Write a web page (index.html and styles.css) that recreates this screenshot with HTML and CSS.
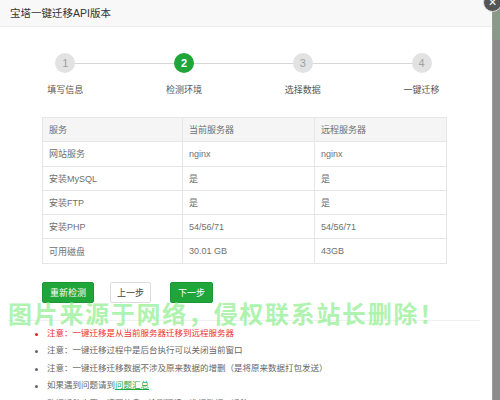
FILE: index.html
```html
<!DOCTYPE html>
<html lang="zh-CN">
<head>
    <meta charset="UTF-8">
    <title>宝塔一键迁移API版本</title>
    <link rel="stylesheet" href="styles.css">
</head>
<body>

<div class="page">
    <!-- 弹窗 -->
    <div class="dialog">
        <div class="dialog-title">宝塔一键迁移API版本</div>

        <!-- 步骤条 -->
        <div class="steps">
            <div class="step">
                <span class="step-num">1</span>
                <span class="step-name">填写信息</span>
            </div>
            <div class="step active">
                <span class="step-num">2</span>
                <span class="step-name">检测环境</span>
            </div>
            <div class="step">
                <span class="step-num">3</span>
                <span class="step-name">选择数据</span>
            </div>
            <div class="step">
                <span class="step-num">4</span>
                <span class="step-name">一键迁移</span>
            </div>
        </div>

        <!-- 环境检测结果 -->
        <table class="env-table">
            <thead>
                <tr><th class="col-name">服务</th><th class="col-cur">当前服务器</th><th>远程服务器</th></tr>
            </thead>
            <tbody>
                <tr><td>网站服务</td><td>nginx</td><td>nginx</td></tr>
                <tr><td>安装MySQL</td><td>是</td><td>是</td></tr>
                <tr><td>安装FTP</td><td>是</td><td>是</td></tr>
                <tr><td>安装PHP</td><td>54/56/71</td><td>54/56/71</td></tr>
                <tr><td>可用磁盘</td><td>30.01 GB</td><td>43GB</td></tr>
            </tbody>
        </table>

        <div class="actions">
            <button class="btn btn-green">重新检测</button>
            <button class="btn btn-plain">上一步</button>
            <button class="btn btn-green">下一步</button>
        </div>

        <div class="divider"></div>

        <ul class="tips">
            <li class="tip-red">注意：一键迁移是从当前服务器迁移到远程服务器</li>
            <li>注意：一键迁移过程中是后台执行可以关闭当前窗口</li>
            <li>注意：一键迁移迁移数据不涉及原来数据的增删（是将原来数据打包发送）</li>
            <li>如果遇到问题请到<a href="#">问题汇总</a></li>
            <li class="no-dot">数据迁移步骤：填写信息 - 检测环境 - 选择数据 - 迁移</li>
        </ul>

        <!-- 水印 -->
        <div class="watermark">图片来源于网络，侵权联系站长删除！</div>
    </div>

    <!-- 遮罩背景 -->
    <div class="backdrop"></div>

    <span class="close-btn">×</span>
</div>

</body>
</html>
```

FILE: styles.css
```css
* {
    margin: 0;
    padding: 0;
    box-sizing: border-box;
}
html, body {
    width: 500px;
    height: 400px;
    overflow: hidden;
}
body {
    font-family: 'Liberation Sans', 'Noto Sans CJK SC', sans-serif;
    color: #666;
    background-color: #fff;
}
.page {
    display: flex;
    height: 400px;
    position: relative;
}
.dialog {
    width: 492px;
    height: 400px;
    background-color: #fff;
    position: relative;
    overflow: hidden;
}
.backdrop {
    flex: 1;
    background: linear-gradient(to bottom, #8a9a88 0, #8a9a88 40px, #8c8c8c 40px, #8c8c8c 100%);
    border-left: 1px solid #9a9a9a;
}
.close-btn {
    position: absolute;
    top: -7px;
    left: 483px;
    width: 19px;
    height: 19px;
    border-radius: 50%;
    background-color: #555;
    border: 1px solid #ddd;
    color: #fff;
    font-size: 14px;
    line-height: 17px;
    text-align: center;
}
.dialog-title {
    height: 27px;
    line-height: 26px;
    padding-left: 10px;
    background-color: #f8f8f8;
    border-bottom: 1px solid #eee;
    color: #333;
    font-size: 10.5px;
}
/* 步骤条 */
.steps {
    display: flex;
    padding: 26px 11px 0 6px;
    position: relative;
}
.steps::before {
    content: "";
    position: absolute;
    top: 36px;
    left: 65px;
    right: 71px;
    height: 1px;
    background-color: #d6d6d6;
}
.step {
    flex: 1;
    display: flex;
    flex-direction: column;
    align-items: center;
    position: relative;
}
.step-num {
    width: 20px;
    height: 20px;
    border-radius: 50%;
    background-color: #e2e2e2;
    color: #a0a0a0;
    font-size: 11px;
    line-height: 20px;
    text-align: center;
}
.step.active .step-num {
    background-color: #20a53a;
    color: #fff;
    font-weight: bold;
}
.step-name {
    margin-top: 11px;
    font-size: 9px;
    line-height: 12px;
    color: #555;
}
/* 表格 */
.env-table {
    margin: 21px 0 0 42px;
    width: 405px;
    border-collapse: collapse;
    border: 1px solid #e2e2e2;
    font-size: 9px;
    table-layout: fixed;
}
.env-table th, .env-table td {
    height: 24.3px;
    padding: 0 6px;
    text-align: left;
    font-weight: normal;
    border: 1px solid #e6e6e6;
    color: #707070;
}
.env-table th {
    background-color: #f5f5f5;
}
.col-name {
    width: 140px;
}
.col-cur {
    width: 132px;
}
/* 按钮 */
.actions {
    display: flex;
    padding: 18px 0 0 42px;
}
.btn {
    height: 21px;
    font-size: 9px;
    border-radius: 2px;
    font-family: 'Liberation Sans', 'Noto Sans CJK SC', sans-serif;
    cursor: pointer;
}
.btn-green {
    background-color: #20a53a;
    border: 1px solid #1c9634;
    color: #fff;
    padding: 0 7px;
}
.btn-plain {
    background-color: #fff;
    border: 1px solid #ddd;
    color: #444;
    padding: 0 6px;
    margin: 0 19px 0 16px;
}
.divider {
    margin: 17px 12px 0 8px;
    height: 1px;
    background-color: #f0f0f0;
}
/* 提示 */
.tips {
    list-style: none;
    padding: 4px 0 0 47px;
    font-size: 8.5px;
    line-height: 17.5px;
    color: #666;
}
.tips li {
    position: relative;
    white-space: nowrap;
}
.tips li::before {
    content: "";
    position: absolute;
    left: -12px;
    top: 8px;
    width: 3px;
    height: 3px;
    border-radius: 50%;
    background-color: #666;
}
.tips li.no-dot::before {
    display: none;
}
.tips .tip-red {
    color: #f03030;
}
.tips .tip-red::before {
    background-color: #e02020;
}
.tips a {
    color: #20a53a;
}
.watermark {
    position: absolute;
    top: 300px;
    left: 8px;
    font-family: 'Noto Sans CJK SC', sans-serif;
    font-weight: bold;
    font-size: 24px;
    letter-spacing: 1.7px;
    line-height: 26px;
    color: rgba(140, 238, 140, 0.7);
    white-space: nowrap;
}
```
